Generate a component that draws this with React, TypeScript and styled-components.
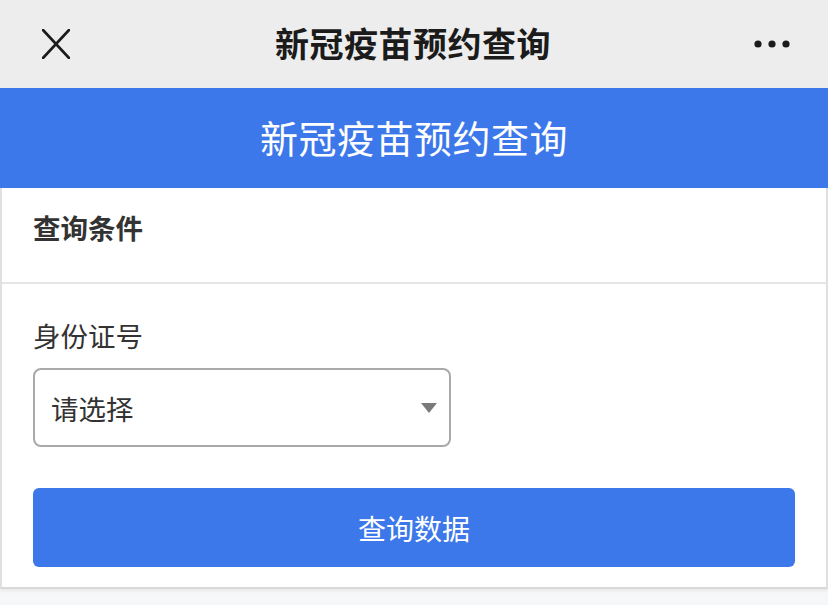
import React from "react";
import styled, { createGlobalStyle } from "styled-components";

const GlobalStyle = createGlobalStyle`
  html, body {
    margin: 0;
    padding: 0;
    background: #f6f7f9;
    font-family: "Noto Sans CJK SC", "Noto Sans", sans-serif;
  }
  * { box-sizing: border-box; }
`;

const Page = styled.div`
  width: 828px;
  min-height: 605px;
  background: #f6f7f9;
`;

const NavBar = styled.header`
  height: 88px;
  background: #ededed;
  display: grid;
  grid-template-columns: 1fr auto 1fr;
  align-items: center;
  padding: 0 38px 0 42px;
`;

const NavLeft = styled.div`
  justify-self: start;
  display: flex;
  align-items: center;
`;

const NavRight = styled.div`
  justify-self: end;
  display: flex;
  align-items: center;
`;

const NavTitle = styled.h1`
  margin: 0;
  font-size: 34px;
  font-weight: 700;
  color: #1b1b1b;
  line-height: 44px;
  letter-spacing: 0.5px;
  transform: translate(-3px, -1px);
`;

const Banner = styled.div`
  height: 100px;
  padding-bottom: 4px;
  background: #3d78ea;
  color: #ffffff;
  display: flex;
  align-items: center;
  justify-content: center;
  font-size: 38px;
  font-weight: 400;
  letter-spacing: 0.5px;
`;

const Card = styled.section`
  background: #ffffff;
  border-left: 2px solid #e0e0e0;
  border-right: 2px solid #e0e0e0;
  border-bottom: 2px solid #d9d9d9;
  box-shadow: 0 2px 3px rgba(0, 0, 0, 0.06);
`;

const CardHeader = styled.div`
  height: 96px;
  padding: 21px 31px 0;
  border-bottom: 2px solid #e6e6e6;
  font-size: 27.5px;
  font-weight: 700;
  line-height: 36px;
  color: #333333;
`;

const CardBody = styled.div`
  padding: 33px 31px 20px;
  display: flex;
  flex-direction: column;
`;

const FieldLabel = styled.label`
  font-size: 27.5px;
  line-height: 36px;
  color: #333333;
`;

const SelectBox = styled.div`
  margin-top: 15px;
  width: 418px;
  height: 79px;
  border: 2px solid #a9a9a9;
  border-radius: 8px;
  display: flex;
  align-items: center;
  justify-content: space-between;
  padding: 0 12px 0 16px;
`;

const SelectText = styled.span`
  font-size: 27.5px;
  color: #333333;
  line-height: 36px;
`;

const Caret = styled.span`
  width: 0;
  height: 0;
  border-left: 8px solid transparent;
  border-right: 8px solid transparent;
  border-top: 10px solid #7a7a7a;
`;

const PrimaryButton = styled.button`
  margin-top: 41px;
  width: 100%;
  height: 79px;
  border: none;
  border-radius: 6px;
  background: #3c78e9;
  color: #ffffff;
  font-family: inherit;
  font-size: 28px;
  line-height: 36px;
  cursor: pointer;
`;

const CloseIcon = () => (
  <svg width="28" height="30" viewBox="0 0 28 30" fill="none">
    <path d="M1 1 L27 29 M27 1 L1 29" stroke="#1b1b1b" strokeWidth="2.6" strokeLinecap="round" />
  </svg>
);

const MoreIcon = () => (
  <svg width="36" height="8" viewBox="0 0 36 8">
    <circle cx="4" cy="4" r="3.6" fill="#1b1b1b" />
    <circle cx="18" cy="4" r="3.6" fill="#1b1b1b" />
    <circle cx="32" cy="4" r="3.6" fill="#1b1b1b" />
  </svg>
);

export default function App() {
  return (
    <>
      <GlobalStyle />
      <Page>
        <NavBar>
          <NavLeft>
            <CloseIcon />
          </NavLeft>
          <NavTitle>新冠疫苗预约查询</NavTitle>
          <NavRight>
            <MoreIcon />
          </NavRight>
        </NavBar>
        <Banner>新冠疫苗预约查询</Banner>
        <Card>
          <CardHeader>查询条件</CardHeader>
          <CardBody>
            <FieldLabel>身份证号</FieldLabel>
            <SelectBox>
              <SelectText>请选择</SelectText>
              <Caret />
            </SelectBox>
            <PrimaryButton>查询数据</PrimaryButton>
          </CardBody>
        </Card>
      </Page>
    </>
  );
}
